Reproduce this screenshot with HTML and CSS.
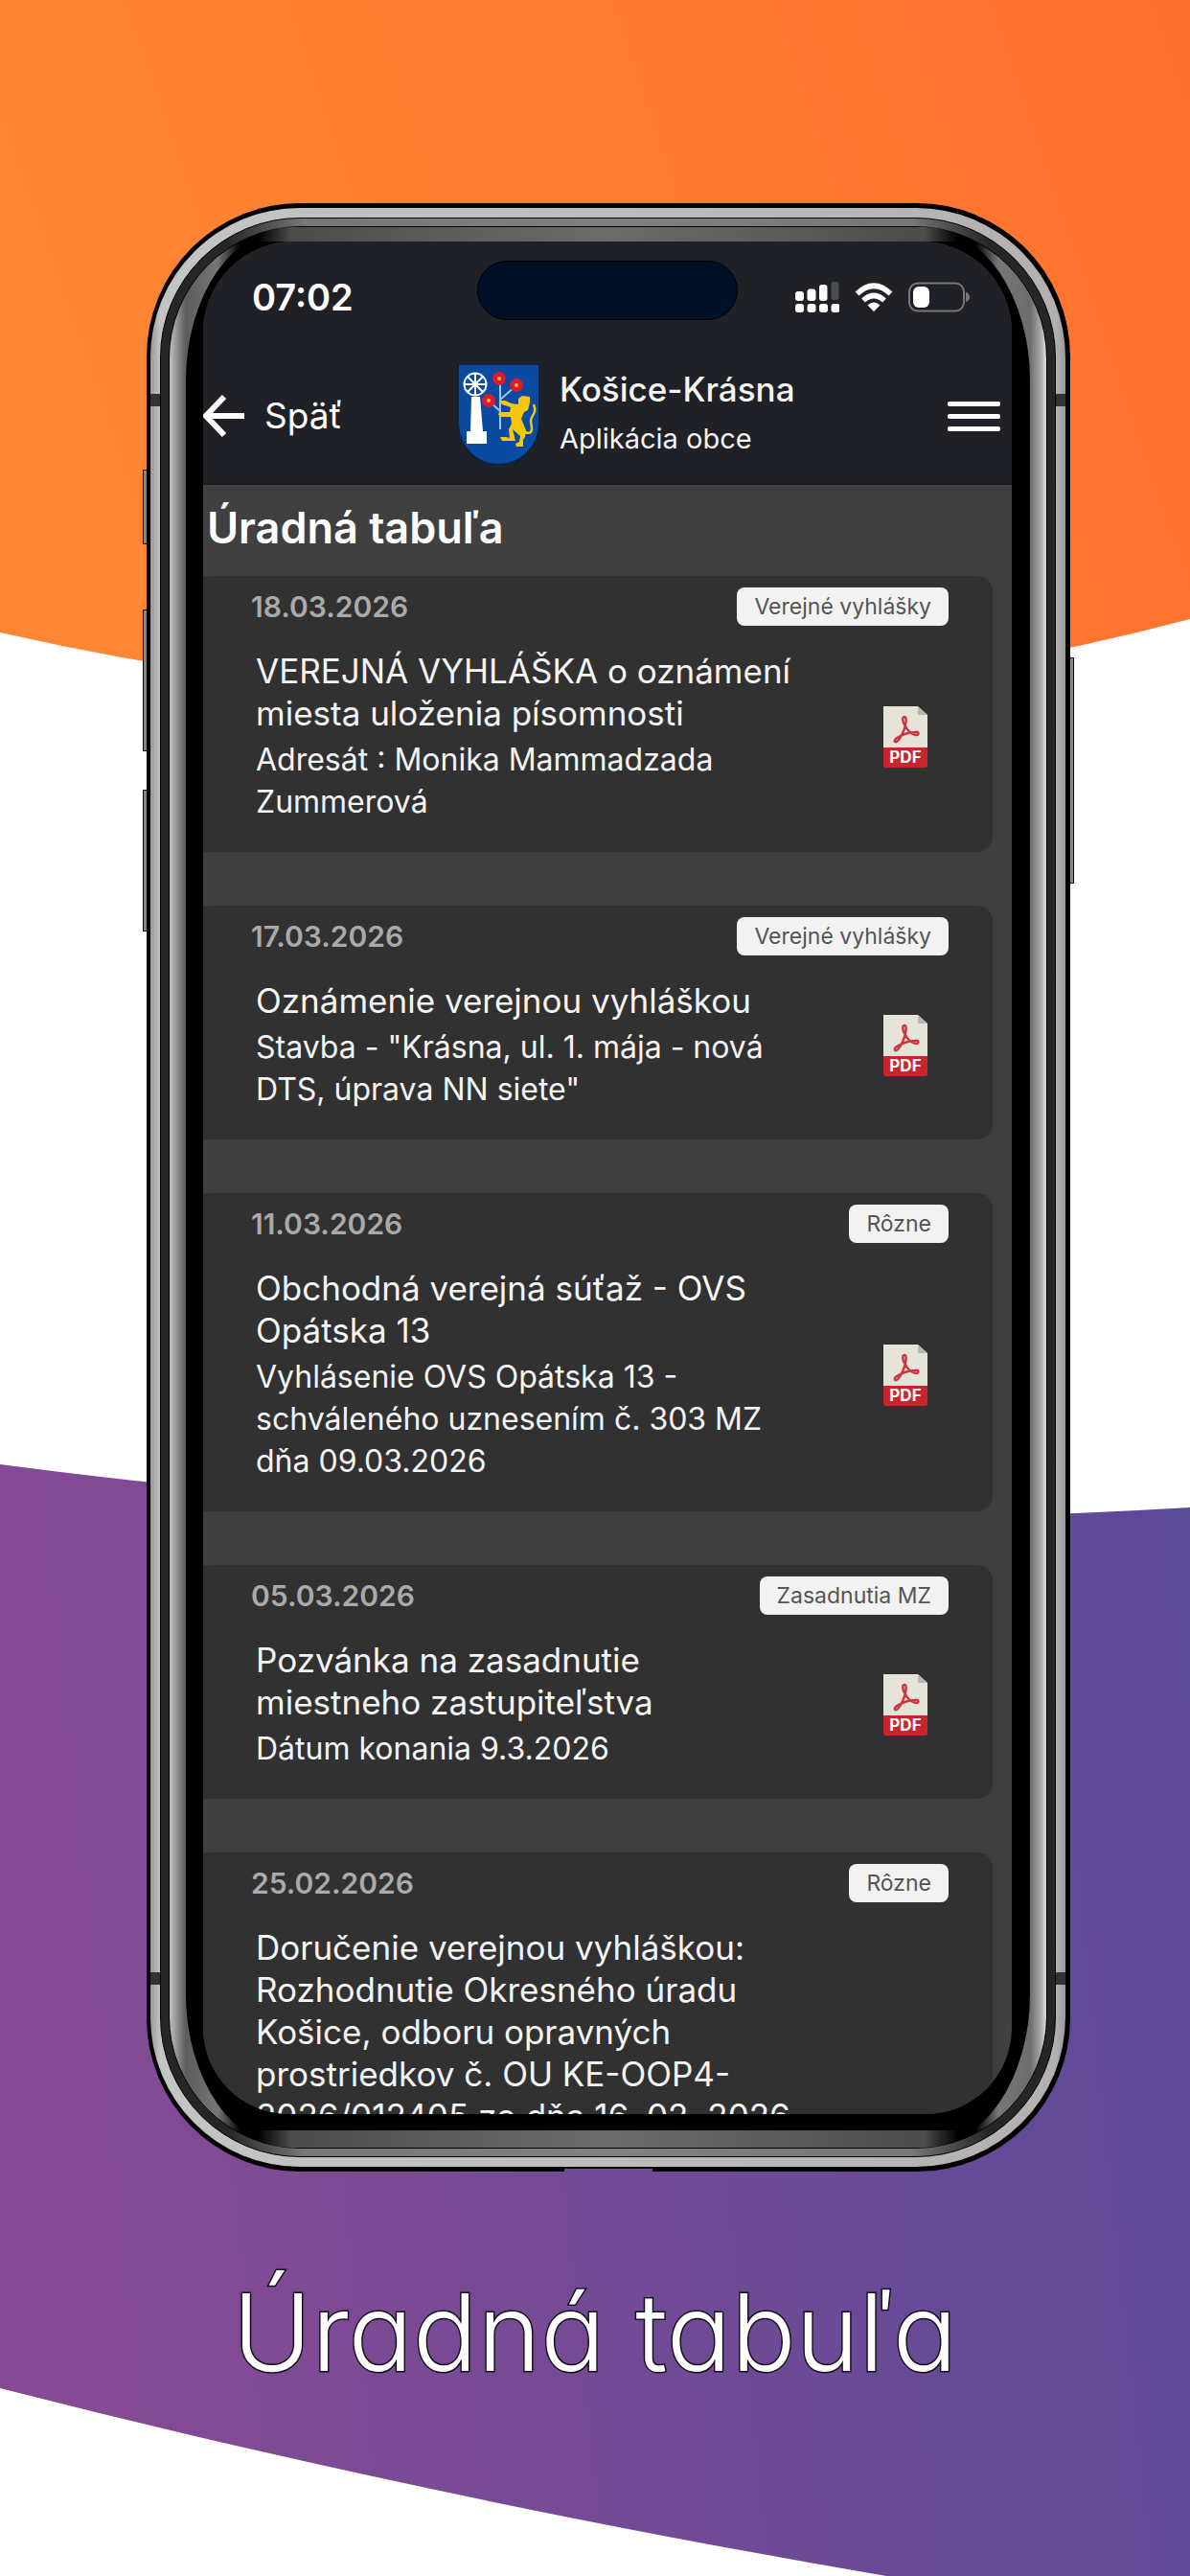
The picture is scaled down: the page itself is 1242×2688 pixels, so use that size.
FILE: index.html
```html
<!DOCTYPE html>
<html lang="sk">
<head>
<meta charset="utf-8">
<meta name="viewport" content="width=device-width, initial-scale=1">
<title>Úradná tabuľa</title>
<link rel="stylesheet" href="styles.css">
</head>
<body>
<svg class="backdrop" viewBox="0 0 1242 2688" preserveAspectRatio="none" aria-hidden="true">
  <defs>
    <linearGradient id="orange" x1="0" y1="0.2" x2="1" y2="0"><stop offset="0" stop-color="#ff8632"/><stop offset="1" stop-color="#ff702e"/></linearGradient>
    <linearGradient id="purple" x1="0" y1="0.1" x2="1" y2="0"><stop offset="0" stop-color="#864a94"/><stop offset="1" stop-color="#5b4a98"/></linearGradient>
    <g id="pdf">
      <path fill="#e6e4d8" d="M0 0H36L46 9V44H0Z"/>
      <path fill="#b9b7aa" d="M36 0L46 9H36Z"/>
      <path fill="#c9252f" d="M0 43H46V62Q46 64 44 64H2Q0 64 0 62Z"/>
      <path fill="none" stroke="#cf3340" stroke-width="2.4" stroke-linejoin="round" d="M22 11C19 11 20 17 23 21C25 25 29 29 34 30C38 30 37 26 33 27C27 27 19 30 14 33C10 36 12 39 15 36C18 33 22 25 23 19C24 15 24 11 22 11Z"/>
    </g>
  </defs>
  <path fill="url(#orange)" d="M0 0H1242V646Q640 806 0 660Z"/>
  <path fill="url(#purple)" d="M0 1528Q620 1610 1242 1573V2688H925Q440 2605 0 2492Z"/>
</svg>

<main class="page">
  <div class="phone">
    <i class="key key-a"></i><i class="key key-b"></i><i class="key key-c"></i><i class="key key-d"></i>
    <i class="port"></i>
    <div class="metal">
      <i class="band band-tl"></i><i class="band band-tr"></i><i class="band band-bl"></i><i class="band band-br"></i>
      <div class="rim"><div class="bezel"><div class="glass">
        <div class="screen">
          <div class="status">
            <span class="time">07:02</span>
            <span class="island"></span>
            <span class="indicators">
              <svg width="46" height="34" viewBox="0 0 46 34" fill="#fff" aria-hidden="true">
                <rect x="0" y="11" width="9" height="10" rx="3"/><rect x="12.500" y="8.500" width="9" height="12.500" rx="3"/><rect x="25" y="4" width="8.500" height="17" rx="3"/><rect x="37.500" y="1" width="8" height="19" rx="3" fill="#4b4c50"/>
                <rect x="0" y="24" width="9" height="9" rx="3"/><rect x="12.500" y="24" width="9" height="9" rx="3"/><rect x="25" y="24" width="9" height="9" rx="3"/><rect x="37.500" y="24" width="9" height="9" rx="3"/>
              </svg>
              <svg width="40" height="30" viewBox="0 0 40 30" aria-hidden="true">
                <g fill="none" stroke="#fff" stroke-width="5.500"><path d="M2.500 11.500Q20-5 37.500 11.500"/><path d="M9 18.500Q20 8.500 31 18.500"/></g>
                <path fill="#fff" d="M13.500 23.500Q20 17.500 26.500 23.500L20 30Z"/>
              </svg>
              <svg width="64" height="32" viewBox="0 0 64 32" aria-hidden="true">
                <rect x="1" y="1.500" width="57" height="29" rx="9" fill="none" stroke="#77787c" stroke-width="2"/>
                <rect x="5" y="5" width="17" height="22" rx="6" fill="#fff"/>
                <path fill="#77787c" d="M60 11Q64 12 64 16T60 21Z"/>
              </svg>
            </span>
          </div>

          <header class="topbar">
            <a class="back" href="#">
              <svg width="44" height="46" viewBox="0 0 44 46" fill="none" stroke="#fff" stroke-width="6" aria-hidden="true"><path d="M43 23H4M22 3L3 23L22 43"/></svg>
              <span>Späť</span>
            </a>
            <div class="brand">
              <svg width="87" height="107" viewBox="0 0 87 107" aria-hidden="true">
                <path fill="#0a4aa0" stroke="#0b2440" stroke-width="2" d="M1 1H86V62C86 88 66 106 43.500 106C21 106 1 88 1 62Z"/>
                <g fill="none" stroke="#fff" stroke-width="2"><circle cx="19" cy="22" r="11.500"/><path d="M19 10V34M7 22H31M11 14L27 30M27 14L11 30"/></g>
                <path fill="#fff" d="M15 35H24L27 71H31V84H10V71H14Z"/>
                <path fill="none" stroke="#9cc4f0" stroke-width="2" d="M45 20V69M61 24L45 38M34 40L45 50"/>
                <g fill="#e2182d"><circle cx="44" cy="16" r="7"/><circle cx="62" cy="23" r="7"/><circle cx="33" cy="39" r="7"/></g>
                <g fill="#ffc83a"><circle cx="44" cy="16" r="2"/><circle cx="62" cy="23" r="2"/><circle cx="33" cy="39" r="2"/></g>
                <path fill="#f8c808" d="M64 37L68 34L76 35V41L74 49L70 51L67 58L72 70L71 77L69 80V87H62L61 84L65 82L66 76L58 69L61 81H47L45 77H51L55 78L54 69L57 63L56 56L47 56L43 54L44 51L55 51L56 46L47 43L44 39L50 39L57 42L64 43Z"/>
                <path fill="none" stroke="#f8c808" stroke-width="2.500" d="M70 72C82 76 77 65 77 60C77 54 84 53 80 43"/>
              </svg>
              <div class="brand-text">
                <strong>Košice-Krásna</strong>
                <span>Aplikácia obce</span>
              </div>
            </div>
            <button class="menu" type="button" aria-label="Menu"><i></i><i></i><i></i></button>
          </header>

          <section class="board">
            <h1>Úradná tabuľa</h1>
            <article class="card">
              <div class="card-head"><time>18.03.2026</time><span class="tag">Verejné vyhlášky</span></div>
              <div class="card-body">
                <div class="card-text"><h2>VEREJNÁ VYHLÁŠKA o oznámení miesta uloženia písomnosti</h2><p>Adresát : Monika Mammadzada Zummerová</p></div>
                <a class="pdf" href="#"><svg width="46" height="64"><use href="#pdf"/><text x="23" y="59" text-anchor="middle">PDF</text></svg></a>
              </div>
            </article>
            <article class="card">
              <div class="card-head"><time>17.03.2026</time><span class="tag">Verejné vyhlášky</span></div>
              <div class="card-body">
                <div class="card-text"><h2>Oznámenie verejnou vyhláškou</h2><p>Stavba - "Krásna, ul. 1. mája - nová DTS, úprava NN siete"</p></div>
                <a class="pdf" href="#"><svg width="46" height="64"><use href="#pdf"/><text x="23" y="59" text-anchor="middle">PDF</text></svg></a>
              </div>
            </article>
            <article class="card">
              <div class="card-head"><time>11.03.2026</time><span class="tag">Rôzne</span></div>
              <div class="card-body">
                <div class="card-text"><h2>Obchodná verejná súťaž - OVS Opátska 13</h2><p>Vyhlásenie OVS Opátska 13 - schváleného uznesením č. 303 MZ dňa 09.03.2026</p></div>
                <a class="pdf" href="#"><svg width="46" height="64"><use href="#pdf"/><text x="23" y="59" text-anchor="middle">PDF</text></svg></a>
              </div>
            </article>
            <article class="card">
              <div class="card-head"><time>05.03.2026</time><span class="tag">Zasadnutia MZ</span></div>
              <div class="card-body">
                <div class="card-text"><h2>Pozvánka na zasadnutie miestneho zastupiteľstva</h2><p>Dátum konania 9.3.2026</p></div>
                <a class="pdf" href="#"><svg width="46" height="64"><use href="#pdf"/><text x="23" y="59" text-anchor="middle">PDF</text></svg></a>
              </div>
            </article>
            <article class="card">
              <div class="card-head"><time>25.02.2026</time><span class="tag">Rôzne</span></div>
              <div class="card-body">
                <div class="card-text"><h2>Doručenie verejnou vyhláškou: Rozhodnutie Okresného úradu Košice, odboru opravných prostriedkov č. OU KE-OOP4-<wbr>2026/012405 zo dňa 16. 02. 2026</h2></div>
              </div>
            </article>
          </section>
        </div>
      </div></div></div>
    </div>
  </div>
  <p class="caption">Úradná tabuľa</p>
</main>
</body>
</html>
```

FILE: styles.css
```css
* { box-sizing: border-box; }
body {
  margin: 0;
  position: relative;
  background: #fff;
  color: #f4f4f4;
  font-family: Inter, "Liberation Sans", sans-serif;
}
.backdrop { position: absolute; inset: 0; width: 100%; height: 100%; z-index: -1; }
.page { min-height: 100vh; padding-top: 212px; }

/* Device frame: nested shells, each one a ring of the casing */
.phone {
  position: relative;
  display: grid;
  grid-template-rows: minmax(0, 1fr);
  aspect-ratio: 964 / 2054;
  margin: 0 125px 0 153px;
  padding: 5px 5px 5px 4px;
  background: #000;
  border-radius: 160px;
}
.metal, .rim, .bezel, .glass { display: grid; grid-template-rows: minmax(0, 1fr); min-height: 0; }
.metal {
  position: relative;
  padding: 10px;
  border-radius: 156px;
  background: linear-gradient(to right, #999 0, #c4c4c4 10px, #bdbdbd 50%, #b4b0b2 calc(100% - 10px), #999);
}
.rim {
  padding: 8px;
  border-radius: 146px;
  border: 1px solid #000;
  background: linear-gradient(to right, #262626 70px, #777 150px, #808080 50%, #777 calc(100% - 150px), #262626 calc(100% - 70px));
}
.bezel {
  padding: 0 17px;
  border: 1px solid #000;
  border-radius: 138px;
  background: linear-gradient(to right, #c0c0c0, #909090 8px, #5c5c5c 17px, #777 50px, #000 74px, #000 calc(100% - 74px), #777 calc(100% - 50px), #6c6c6c calc(100% - 17px), #a8a8a8 calc(100% - 6px), #e0e0e0);
}
.glass {
  padding: 15px 19px 35px 18px;
  border-radius: 110px / 160px;
  background:
    linear-gradient(to right, #000 75px, #4c4c4c 110px, #6c6c6c 50%, #4c4c4c calc(100% - 110px), #000 calc(100% - 75px)) top / 100% 15px no-repeat,
    linear-gradient(to right, #000 75px, #4c4c4c 110px, #6c6c6c 50%, #4c4c4c calc(100% - 110px), #000 calc(100% - 75px)) bottom / 100% 18px no-repeat,
    #000;
}
.screen {
  overflow: hidden;
  border-radius: 95px 95px 90px 90px;
  background: #404040;
}
.key { position: absolute; width: 5px; border: 1px solid #000; background: #888; }
.key-a { left: -4px; top: 278px; height: 78px; }
.key-b { left: -4px; top: 424px; height: 148px; }
.key-c { left: -4px; top: 612px; height: 148px; }
.key-d { right: -4px; top: 474px; height: 236px; }
.port { position: absolute; left: 436px; right: 436px; bottom: 0; height: 3px; background: #744a96; }
.band { position: absolute; width: 10px; height: 13px; background: #333; }
.band-tl { left: 0; top: 194px; }
.band-tr { right: 0; top: 194px; }
.band-bl { left: 0; bottom: 190px; }
.band-br { right: 0; bottom: 190px; }

/* Status bar */
.status {
  display: grid;
  grid-template-columns: 1fr 272px 1fr;
  height: 120px;
  padding-top: 20px;
  background: #202126;
  color: #fff;
}
.time { padding: 14px 0 0 51px; font-size: 38px; line-height: 48px; font-weight: 600; }
.island { height: 62px; border: 1px solid #000; border-radius: 31px; background: #001127; }
.indicators { display: flex; align-items: center; justify-content: flex-end; gap: 16px; height: 76px; padding-right: 44px; }

/* App bar */
.topbar {
  display: grid;
  grid-template-columns: 265px 1fr auto;
  align-items: center;
  height: 134px;
  padding: 0 12px 8px 0;
  background: #202126;
  border-bottom: 2px solid #1b1a22;
}
.back { display: flex; align-items: center; gap: 20px; color: #fff; text-decoration: none; font-size: 37px; line-height: 44px; }
.brand { display: flex; align-items: center; gap: 20px; padding-bottom: 4px; }
.brand-text { display: flex; flex-direction: column; gap: 10px; padding-bottom: 6px; }
.brand-text strong { font-size: 35px; line-height: 48px; font-weight: 500; }
.brand-text span { font-size: 29px; line-height: 36px; }
.menu { display: flex; flex-direction: column; gap: 8px; width: 55px; padding: 0; border: 0; background: none; }
.menu i { height: 5px; width: 100%; border-radius: 2px; background: #fff; }

/* Notice board */
.board { display: flex; flex-direction: column; gap: 56px; padding-right: 20px; border-top: 1px solid #484848; }
.board h1 { margin: 0 0 -56px; padding: 16px 0 22px 4px; font-size: 45px; line-height: 56px; font-weight: 600; color: #fff; }
.card { padding: 12px 46px 30px 50px; border-radius: 0 16px 16px 0; background: #313131; box-shadow: 0 0 16px rgba(0, 0, 0, 0.08); }
.card-head { display: flex; align-items: center; justify-content: space-between; height: 40px; margin-bottom: 25px; }
.card-head time { font-size: 30px; line-height: 40px; font-weight: 600; color: #aaa; }
.tag { padding: 0 18px; border-radius: 8px; background: #f2f2f2; color: #555; font-size: 23px; line-height: 40px; }
.card-body { display: flex; align-items: center; justify-content: space-between; padding: 0 22px 0 5px; }
.card-text { width: 574px; display: flex; flex-direction: column; gap: 5px; }
.card h2, .card p { margin: 0; font-weight: 400; line-height: 44px; color: #f4f4f4; }
.card h2 { font-size: 35px; }
.card p { font-size: 32px; }
.pdf { display: flex; }
.pdf text { font: 700 17px Inter, sans-serif; fill: #fff; }

.caption {
  margin: 0;
  padding: 97px 0 120px;
  text-align: center;
  color: #fff;
  font-size: 112px;
  line-height: 140px;
  font-weight: 300;
  font-feature-settings: "cv11";
  -webkit-text-stroke: 3px #15101c;
  paint-order: stroke fill;
}
```
